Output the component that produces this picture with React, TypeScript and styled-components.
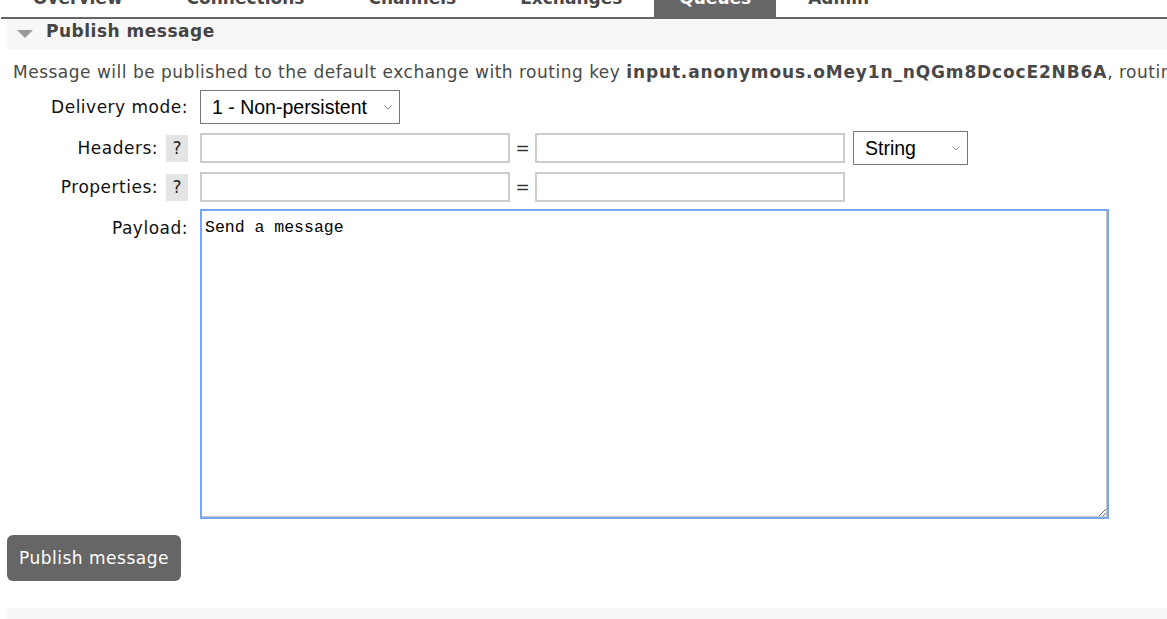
import styled, { createGlobalStyle } from "styled-components";

const GlobalStyle = createGlobalStyle`
  html, body {
    margin: 0;
    padding: 0;
    background: #fff;
    overflow: hidden;
  }
  body {
    font-family: "DejaVu Sans", Verdana, sans-serif;
    font-size: 17px;
    letter-spacing: 0.5px;
    color: #484848;
  }
`;

const Page = styled.div`
  padding-left: 7px;
  width: 1400px;
`;

const Tabs = styled.ul`
  display: flex;
  margin: -15px 0 0 -6px;
  padding: 0;
  list-style: none;
  border-bottom: 2px solid #666;
`;

const Tab = styled.li<{ $active?: boolean; $pad: number }>`
  height: 32px;
  line-height: 26px;
  padding: 0 ${(p) => p.$pad}px;
  font-weight: bold;
  letter-spacing: 0;
  color: ${(p) => (p.$active ? "#fff" : "#484848")};
  background: ${(p) => (p.$active ? "#666" : "transparent")};
  white-space: nowrap;
`;

const SectionHeader = styled.h2`
  display: flex;
  align-items: center;
  gap: 13px;
  box-sizing: border-box;
  height: 30px;
  margin: 0;
  padding: 0 0 6px 10px;
  background: #f7f7f7;
  color: #444;
  font-size: 17px;
  font-weight: bold;
`;

const Triangle = styled.span`
  width: 0;
  height: 0;
  margin-top: 6px;
  border-left: 8px solid transparent;
  border-right: 8px solid transparent;
  border-top: 8px solid #999;
`;

const Body = styled.div`
  padding: 12px 0 0 6px;
`;

const Intro = styled.p`
  margin: 0;
  white-space: nowrap;
  line-height: 22px;
  color: #484848;

  b {
    letter-spacing: 0.85px;
  }
`;

const FormGrid = styled.div`
  display: grid;
  grid-template-columns: 175px auto;
  column-gap: 12px;
  row-gap: 7px;
  margin-top: 7px;
  align-items: center;
`;

const Label = styled.div<{ $top?: boolean }>`
  display: flex;
  justify-content: flex-end;
  align-items: center;
  gap: 8px;
  align-self: ${(p) => (p.$top ? "start" : "center")};
  padding-top: ${(p) => (p.$top ? "8px" : "0")};
  line-height: 22px;
  color: #111;
  white-space: nowrap;
`;

const Help = styled.span`
  display: inline-flex;
  align-items: center;
  justify-content: center;
  width: 22px;
  height: 27px;
  background: #e4e4e4;
  color: #222;
  letter-spacing: 0;
`;

const Field = styled.div`
  display: flex;
  align-items: center;
`;

const SelectWrap = styled.span`
  position: relative;
  display: inline-block;
`;

const Select = styled.select<{ $w: number }>`
  display: block;
  box-sizing: border-box;
  width: ${(p) => p.$w}px;
  height: 34px;
  padding: 0 20px 0 11px;
  border: 1px solid #767676;
  border-radius: 0;
  appearance: none;
  background: #fff;
  color: #000;
  font-family: "Liberation Sans", Arial, sans-serif;
  font-size: 19.5px;
  letter-spacing: 0;
`;

const Chevron = styled.svg`
  position: absolute;
  top: 15px;
  right: 8px;
  width: 8px;
  height: 5px;
  pointer-events: none;
`;

const TextInput = styled.input`
  box-sizing: border-box;
  width: 310px;
  height: 30px;
  border: 2px solid #ccc;
  background: #fff;
  outline: none;
`;

const Equals = styled.span`
  width: 25px;
  text-align: center;
  color: #333;
  letter-spacing: 0;
`;

const Gap = styled.span`
  width: 8px;
`;

const Payload = styled.textarea`
  box-sizing: border-box;
  width: 909px;
  height: 310px;
  padding: 7px 3px;
  border: 2px solid #79a6f2;
  box-shadow: inset -1px -1px 0 #c8c8c8;
  outline: none;
  font-family: "Liberation Mono", "Courier New", monospace;
  font-size: 16.5px;
  letter-spacing: 0;
  color: #000;
`;

const PublishButton = styled.button`
  display: block;
  height: 46px;
  margin-top: 16px;
  padding: 0 12px;
  border: 0;
  border-radius: 6px;
  background: #666;
  color: #fff;
  font-family: "DejaVu Sans", Verdana, sans-serif;
  font-size: 17px;
  letter-spacing: 0.5px;
  cursor: pointer;
`;

const Footer = styled.div`
  height: 30px;
  margin-top: 27px;
  background: #f7f7f7;
`;

const tabs = [
  { name: "Overview", pad: 32 },
  { name: "Connections", pad: 32 },
  { name: "Channels", pad: 32 },
  { name: "Exchanges", pad: 32 },
  { name: "Queues", pad: 25, active: true },
  { name: "Admin", pad: 32 },
];

function DropSelect({ width, options }: { width: number; options: string[] }) {
  return (
    <SelectWrap>
      <Select $w={width} defaultValue={options[0]}>
        {options.map((o) => (
          <option key={o} value={o}>
            {o}
          </option>
        ))}
      </Select>
      <Chevron viewBox="0 0 8 5">
        <path d="M0.5 0.5L4 4L7.5 0.5" fill="none" stroke="#8a8a8a" strokeWidth="1" />
      </Chevron>
    </SelectWrap>
  );
}

export default function App() {
  return (
    <>
      <GlobalStyle />
      <Page>
        <Tabs>
          {tabs.map((t) => (
            <Tab key={t.name} $active={t.active} $pad={t.pad}>
              {t.name}
            </Tab>
          ))}
        </Tabs>
        <SectionHeader>
          <Triangle />
          Publish message
        </SectionHeader>
        <Body>
          <Intro>
            Message will be published to the default exchange with routing key{" "}
            <b>input.anonymous.oMey1n_nQGm8DcocE2NB6A</b>, routing it to this queue.
          </Intro>
          <FormGrid>
            <Label>Delivery mode:</Label>
            <Field>
              <DropSelect width={200} options={["1 - Non-persistent", "2 - Persistent"]} />
            </Field>

            <Label>
              Headers: <Help>?</Help>
            </Label>
            <Field>
              <TextInput />
              <Equals>=</Equals>
              <TextInput />
              <Gap />
              <DropSelect width={115} options={["String", "Number", "Boolean"]} />
            </Field>

            <Label>
              Properties: <Help>?</Help>
            </Label>
            <Field>
              <TextInput />
              <Equals>=</Equals>
              <TextInput />
            </Field>

            <Label $top>Payload:</Label>
            <Field>
              <Payload defaultValue="Send a message" />
            </Field>
          </FormGrid>
        </Body>
        <PublishButton type="button">Publish message</PublishButton>
        <Footer />
      </Page>
    </>
  );
}
